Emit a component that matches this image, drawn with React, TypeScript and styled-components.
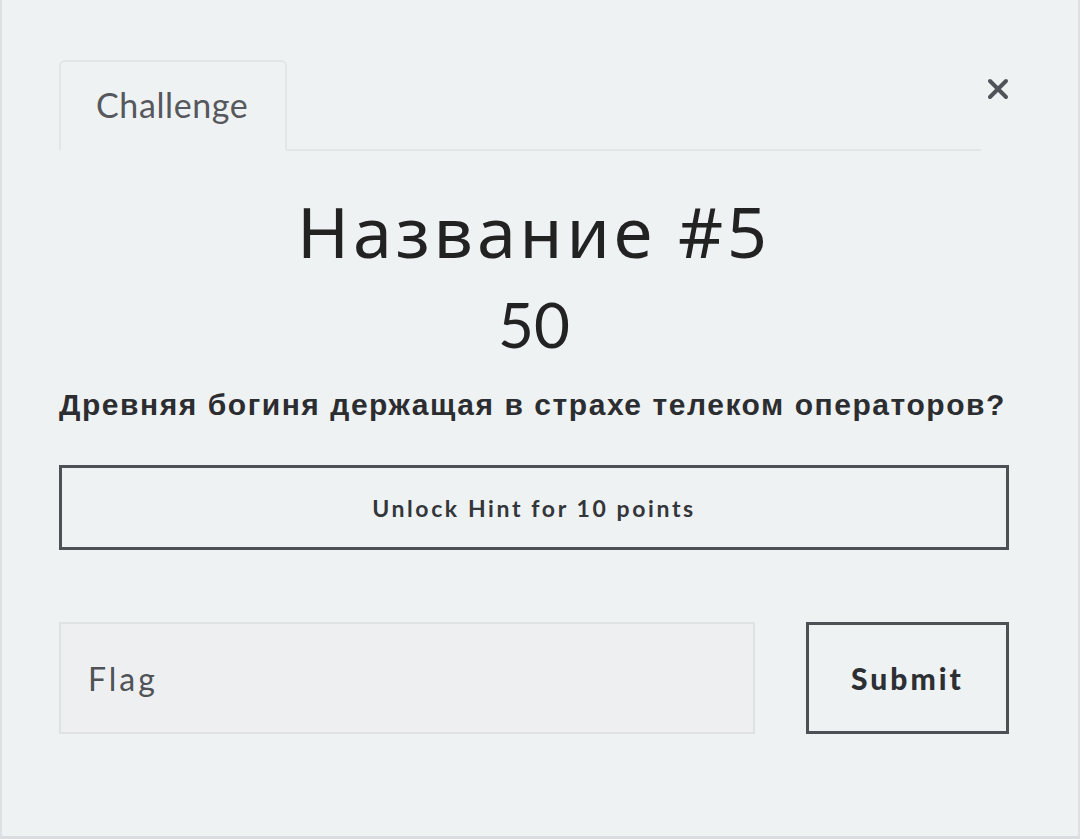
import * as React from 'react';
import styled, { createGlobalStyle } from 'styled-components';

const GlobalStyle = createGlobalStyle`
    html, body {
        margin: 0;
        padding: 0;
        background: #eff2f3;
    }
    * {
        box-sizing: border-box;
    }
`;

const Modal = styled.section`
    width: 1080px;
    height: 839px;
    padding: 60px 69px 0 57px;
    background: #eff2f3;
    border-left: 2px solid #dde1e3;
    border-right: 2px solid #dde1e3;
    border-bottom: 3px solid #d9dde0;
    font-family: Lato, 'Liberation Sans', sans-serif;
    display: flex;
    flex-direction: column;
`;

const Header = styled.div`
    display: flex;
    align-items: flex-start;
`;

const TabList = styled.div`
    flex: 1;
    display: flex;
    border-bottom: 2px solid #e3e6e8;
`;

const Tab = styled.div<{ $active?: boolean }>`
    width: 228px;
    height: 91px;
    padding: 22px 0 0 35px;
    margin-bottom: -2px;
    border: 2px solid #e3e6e8;
    border-bottom-color: ${p => (p.$active ? '#eff2f3' : '#e3e6e8')};
    border-radius: 6px 6px 0 0;
    font-size: 34px;
    color: #55585c;
    letter-spacing: 0.6px;
`;

const Close = styled.button`
    width: 34px;
    margin: 18px -6px 0 0;
    padding: 0;
    border: none;
    background: none;
    color: #505357;
    cursor: pointer;
    display: flex;
    justify-content: center;
`;

const Title = styled.h1`
    margin: 40px 0 0;
    text-align: center;
    font-family: 'Noto Sans', sans-serif;
    font-weight: 400;
    font-size: 70px;
    line-height: 80px;
    color: #222;
    letter-spacing: 3.8px;
`;

const Value = styled.h2`
    margin: 18px 0 0;
    text-align: center;
    font-family: Lato, sans-serif;
    font-weight: 400;
    font-size: 62px;
    line-height: 70px;
    color: #222;
`;

const Description = styled.p`
    margin: 29px 0 0;
    font-family: 'Liberation Sans', Arial, sans-serif;
    font-weight: 700;
    font-size: 30px;
    letter-spacing: 1.55px;
    color: #2b2d30;
`;

const HintButton = styled.button`
    margin-top: 43px;
    width: 100%;
    height: 85px;
    border: 3px solid #4d5156;
    background: transparent;
    font-family: Lato, sans-serif;
    font-weight: 700;
    font-size: 23px;
    letter-spacing: 2.6px;
    color: #33363a;
    cursor: pointer;
`;

const SubmitRow = styled.form`
    margin-top: 72px;
    display: flex;
    gap: 51px;
`;

const FlagInput = styled.input`
    flex: 1;
    height: 112px;
    padding: 0 0 0 27px;
    border: 2px solid #dfe2e4;
    background: #eeeff1;
    font-family: Lato, sans-serif;
    font-size: 32px;
    letter-spacing: 3px;
    color: #333;
    outline: none;
    &::placeholder {
        color: #4f5256;
    }
`;

const SubmitButton = styled.button`
    width: 203px;
    height: 112px;
    border: 3px solid #4d5156;
    background: transparent;
    font-family: Lato, sans-serif;
    font-weight: 900;
    font-size: 30px;
    letter-spacing: 3px;
    color: #2c2f33;
    cursor: pointer;
`;

const CloseIcon = () => (
    <svg width="22" height="22" viewBox="0 0 22 22">
        <path d="M3 3 L19 19 M19 3 L3 19" stroke="currentColor" strokeWidth="4" strokeLinecap="round" />
    </svg>
);

export default function App() {
    return (
        <>
            <GlobalStyle />
            <Modal>
                <Header>
                    <TabList>
                        <Tab $active>Challenge</Tab>
                    </TabList>
                    <Close aria-label="Close">
                        <CloseIcon />
                    </Close>
                </Header>
                <Title>Название #5</Title>
                <Value>50</Value>
                <Description>Древняя богиня держащая в страхе телеком операторов?</Description>
                <HintButton>Unlock Hint for 10 points</HintButton>
                <SubmitRow onSubmit={e => e.preventDefault()}>
                    <FlagInput placeholder="Flag" />
                    <SubmitButton type="submit">Submit</SubmitButton>
                </SubmitRow>
            </Modal>
        </>
    );
}
